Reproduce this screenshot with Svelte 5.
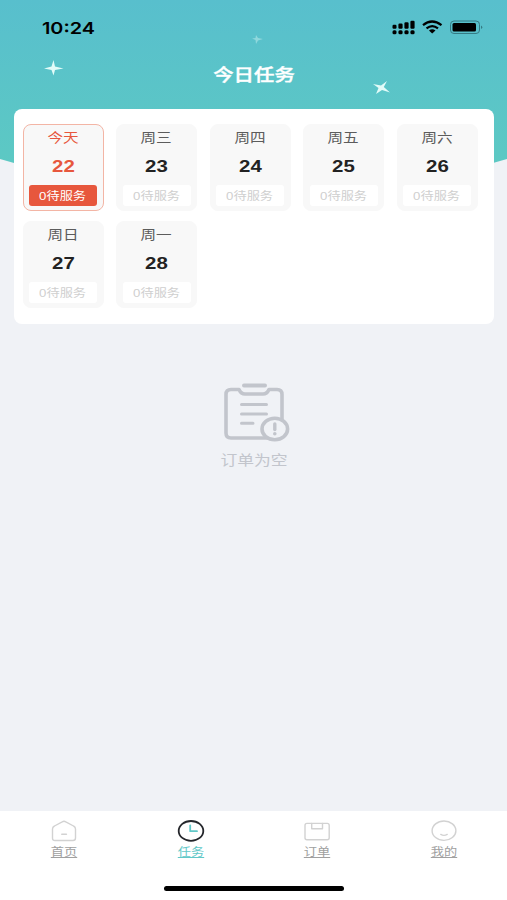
<script>
  let days = [
    { week: '今天', date: 22, count: 0 },
    { week: '周三', date: 23, count: 0 },
    { week: '周四', date: 24, count: 0 },
    { week: '周五', date: 25, count: 0 },
    { week: '周六', date: 26, count: 0 },
    { week: '周日', date: 27, count: 0 },
    { week: '周一', date: 28, count: 0 },
  ];
  let tabs = [
    { name: 'home', text: '首页' },
    { name: 'task', text: '任务' },
    { name: 'order', text: '订单' },
    { name: 'mine', text: '我的' },
  ];
  let active = 22;
  let current = 'task';
</script>

<div class="page">
  <svg class="header-bg" width="507" height="190" viewBox="0 0 507 190">
    <defs>
      <linearGradient id="sky" x1="0" y1="0" x2="0" y2="1">
        <stop offset="0" stop-color="#58bfcd" />
        <stop offset="1" stop-color="#5dcac2" />
      </linearGradient>
    </defs>
    <path d="M0 0H507V159L493 163Q254 210 14 163L0 159Z" fill="url(#sky)" />
    <g fill="#e2fbf8">
      <path d="M53.500 60L55 66.500L63.500 68.500L55 70L53.500 75.500L51.500 70L44 68.500L51.500 66.500Z" />
      <path d="M387 81L383.800 87L390 92.500L382 90L376 94L378.500 88L373 84L381 85.500Z" />
      <path d="M256 35L258 38L263 39L258 40.500L256 44L255.500 40L252 38.500L255.500 38Z" opacity="0.4" />
    </g>
  </svg>

  <div class="status">
    <span class="time">10:24</span>
    <svg width="91" height="15" viewBox="0 0 91 15">
      <g>
        <rect x="0.500" y="4.800" width="4" height="4" rx="1.200" />
        <rect x="6.400" y="3.600" width="4.200" height="5.200" rx="1.200" />
        <rect x="12.400" y="2.200" width="4.200" height="6.600" rx="1.200" />
        <rect x="18.400" y="0.800" width="4.200" height="8" rx="1.200" />
        <rect x="0.500" y="10.300" width="4" height="4" rx="1.500" />
        <rect x="6.400" y="10.300" width="4.200" height="4" rx="1.500" />
        <rect x="12.400" y="10.300" width="4.200" height="4" rx="1.500" />
        <rect x="18.400" y="10.300" width="4.200" height="4" rx="1.500" />
      </g>
      <g fill="none" stroke="#000" stroke-width="2.200">
        <path d="M31 5.200Q40 -2.200 49.500 5.200" />
        <path d="M34.500 8.300Q40.200 3.800 46 8.300" />
      </g>
      <path d="M37 10.500Q40.200 8 43.500 10.500L40.200 13.500Z" />
      <rect x="58.500" y="1" width="29" height="12.500" rx="3.500" fill="none" stroke="#357b84" />
      <rect x="60.500" y="3" width="23.500" height="8.500" rx="1.500" />
      <path d="M89 5.500Q91.500 7.200 89 9Z" fill="#357b84" />
    </svg>
  </div>

  <div class="title"><span>今日任务</span></div>

  <div class="card">
    {#each days as day}
      <div class="day" class:on={day.date === active}>
        <span class="week">{day.week}</span>
        <span class="date">{day.date}</span>
        <div class="count"><span>{day.count}待服务</span></div>
      </div>
    {/each}
  </div>

  <div class="empty">
    <svg width="70" height="60" viewBox="0 0 70 60" fill="none" stroke="#c2c5cc" stroke-width="3.600" stroke-linecap="round" stroke-linejoin="round">
      <path d="M19 7.500H11Q6 7.500 6 12.500V51Q6 56 11 56H57Q62 56 62 51V12.500Q62 7.500 57 7.500H49Q47 12 43 12H25Q21 12 19 7.500Z" />
      <path d="M24 3.500H45" stroke-width="4" />
      <path d="M21.500 22.500H46.500M21.500 32H46.500M21.500 41.300H33" stroke-width="3" />
      <ellipse cx="54.800" cy="47" rx="12.800" ry="10.700" fill="#f0f2f6" />
      <path d="M54.800 42V47.500" stroke-width="3.400" />
      <circle cx="54.800" cy="51.800" r="1.800" fill="#c2c5cc" stroke="none" />
    </svg>
    <span>订单为空</span>
  </div>

  <div class="tabbar">
    <div class="tabs">
      {#each tabs as tab}
        <div class="tab" class:current={tab.name === current}>
          <svg width="28" height="22" viewBox="0 0 28 22" fill="none" stroke="#d2d2d2" stroke-width="1.400" stroke-linejoin="round" stroke-linecap="round">
            {#if tab.name === 'home'}
              <path d="M14 1.300Q14.800 1.300 15.800 1.900L23.500 6Q25.500 7 25.500 9V18Q25.500 20.500 23 20.500H5Q2.500 20.500 2.500 18V9Q2.500 7 4.500 6L12.200 1.900Q13.200 1.300 14 1.300Z" />
              <path d="M11.800 14.200H16.400" stroke-width="1.600" />
            {:else if tab.name === 'task'}
              <ellipse cx="14" cy="10.900" rx="12.300" ry="9.900" stroke="#24262b" stroke-width="1.800" />
              <path d="M13.200 5.300V11.200H20" stroke="#61c8c8" stroke-width="1.800" />
            {:else if tab.name === 'order'}
              <rect x="2" y="3.400" width="24.200" height="16.400" rx="2" />
              <path d="M8.700 3.500V8.700H19.500V3.500" />
            {:else}
              <ellipse cx="14" cy="10.700" rx="11.900" ry="9.700" />
              <path d="M10.800 14.400Q14 16.300 17.200 14.400" />
            {/if}
          </svg>
          <span>{tab.text}</span>
        </div>
      {/each}
    </div>
    <div class="home-line"></div>
  </div>
</div>

<style>
  :global(body) {
    margin: 0;
  }
  .page {
    position: relative;
    display: flex;
    flex-direction: column;
    width: 507px;
    height: 900px;
    overflow: hidden;
    background: #f0f2f6;
    font-family: "Liberation Sans", "Noto Sans CJK SC", sans-serif;
  }
  /* glyphs are drawn wider than they are tall */
  span {
    display: block;
    white-space: nowrap;
    transform: scaleX(1.2);
  }
  .header-bg {
    position: absolute;
    top: 0;
    left: 0;
  }
  .status {
    position: relative;
    display: flex;
    justify-content: space-between;
    align-items: center;
    height: 55px;
    padding: 0 24px 0 42px;
    box-sizing: border-box;
  }
  .time {
    font-family: Inter, sans-serif;
    font-size: 16.500px;
    font-weight: 600;
    transform-origin: left;
  }
  .title {
    position: relative;
    display: flex;
    justify-content: center;
    height: 54px;
    line-height: 41px;
    font-size: 17px;
    font-weight: 500;
    -webkit-text-stroke: 0.4px #fff;
    color: #fff;
  }
  .card {
    position: relative;
    display: grid;
    grid-template-columns: repeat(5, 81px);
    grid-auto-rows: 87px;
    gap: 10px 12.500px;
    height: 215px;
    margin: 0 13px 0 14px;
    padding: 15px 8.500px;
    box-sizing: border-box;
    border-radius: 8px;
    background: #fff;
  }
  .day {
    display: flex;
    flex-direction: column;
    align-items: center;
    box-sizing: border-box;
    border: 1px solid #f8f8f8;
    border-radius: 8px;
    background: #f8f8f8;
    color: #222;
  }
  .week {
    height: 27px;
    line-height: 25px;
    font-size: 13px;
    color: #5c5c5c;
  }
  .date {
    height: 33px;
    line-height: 29px;
    font-size: 17px;
    font-weight: bold;
  }
  .count {
    display: flex;
    justify-content: center;
    width: 68px;
    height: 21px;
    line-height: 23px;
    border-radius: 3px;
    background: #fff;
    font-size: 11px;
    color: #cfcfcf;
  }
  .on {
    border-color: #f3b5a5;
  }
  .on .week,
  .on .date {
    color: #e7573d;
  }
  .on .count {
    background: #e7573d;
    color: #fff;
  }
  .empty {
    display: flex;
    flex: 1;
    flex-direction: column;
    align-items: center;
    padding-top: 58px;
    font-size: 14px;
    line-height: 20px;
    color: #c2c5cc;
  }
  .empty svg {
    margin: 0 0 8px 3px;
  }
  .tabbar {
    height: 89px;
    background: #fff;
  }
  .tabs {
    display: grid;
    grid-template-columns: repeat(4, 1fr);
    height: 75px;
    padding-left: 1px;
  }
  .tab {
    display: flex;
    flex-direction: column;
    align-items: center;
    padding-top: 9px;
    font-size: 11px;
    line-height: 20px;
    color: #a0a0a0;
    text-decoration: underline;
  }
  .current {
    color: #61c8c8;
  }
  .home-line {
    width: 180px;
    height: 5px;
    margin: 0 auto;
    border-radius: 3px;
    background: #000;
  }
</style>
